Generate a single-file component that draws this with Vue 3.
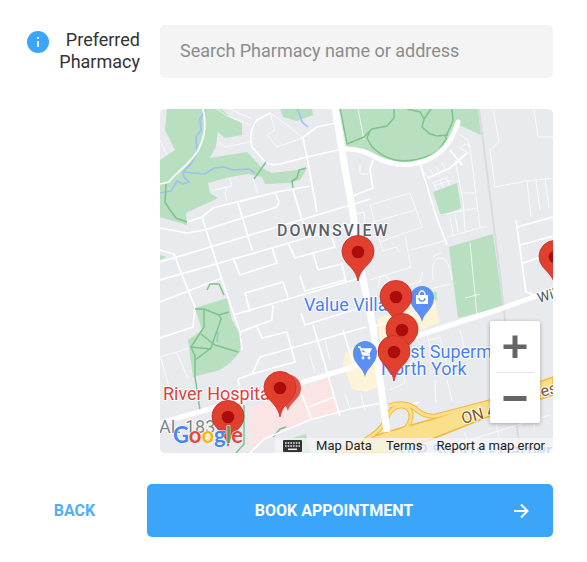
<template>
  <form class="pharmacy-form" @submit.prevent>
    <div class="form-row">
      <div class="label-cell">
        <svg class="info-icon" viewBox="0 0 22 22" aria-hidden="true">
          <circle cx="11" cy="11" r="11" fill="#3aa5f9" />
          <path d="M10 6h2v2h-2zM10 10h2v6h-2z" fill="#e4f3ff" />
        </svg>
        <label for="pharmacy-search">Preferred Pharmacy</label>
      </div>
      <input
        id="pharmacy-search"
        v-model="search"
        class="search-input"
        type="text"
        placeholder="Search Pharmacy name or address"
      />
    </div>

    <div class="form-row">
      <div class="map">
        <svg class="map-canvas" viewBox="160 109 393 344">
          <rect x="160" y="109" width="393" height="344" fill="#e8eaed" />

          <!-- parks -->
          <path v-for="d in parks" :key="d" :d="d" fill="#b8dfc0" />

          <!-- hospital and shopping areas -->
          <path d="M250 408L300 388L329 378L338 411L300 424L263 440L250 447Z" fill="#fae5e4" />
          <path d="M377 319L412 304L435 299L439 323L400 337L380 342Z" fill="#fdf3d6" />
          <path d="M345 353L362 340L374 352L379 386L366 392L352 389L343 365Z" fill="#fdf3d6" />

          <!-- rail line -->
          <path d="M479 109L500 275L520 453" class="rail" />

          <!-- creeks -->
          <path v-for="d in creeks" :key="d" :d="d" class="creek" />

          <!-- streets -->
          <path v-for="d in lanes" :key="d" :d="d" class="road lane" />
          <path v-for="d in streets" :key="d" :d="d" class="road street" />
          <path v-for="d in trails" :key="d" :d="d" class="trail" />
          <path d="M160 423L213 408L297 384L353 367L420 335L500 309L553 290" class="road avenue" />
          <path d="M250 453L264 439L310 420L350 409L382 403" class="road street" />
          <path d="M347 149C360 149 368 153 377 158C400 169 424 166 441 151Q452 141 458 122" class="road crescent" />

          <!-- highway -->
          <path d="M365 440Q381 431 386 420C391 401 413 403 411 417S400 430 392 434" class="ramp-edge" />
          <path d="M389 406Q407 400 418 411Q426 417 436 416L490 402" class="ramp-edge" />
          <path d="M330 453L383 433L433 419L490 400L553 377V395L490 416L432 439L392 453Z" class="highway" />
          <path d="M365 440Q381 431 386 420C391 401 413 403 411 417S400 430 392 434" class="ramp" />
          <path d="M389 406Q407 400 418 411Q426 417 436 416L490 402" class="ramp" />
          <path d="M335 108L345 169L352 207L361 270L373 327L387 432" class="road arterial" />

          <!-- labels -->
          <g class="labels">
            <text x="277" y="236" class="district">DOWNSVIEW</text>
            <text x="304" y="311" class="poi">Value Villa</text>
            <text x="492" y="358" text-anchor="end" class="poi">Trust Superm</text>
            <text x="381" y="375" class="poi">North York</text>
            <text x="394" y="457" class="poi">SVP Sports - Cartwri</text>
            <text x="163" y="400" class="poi hospital">River Hospita</text>
            <text x="159" y="433" class="area">AL 183</text>
            <text x="463" y="424" transform="rotate(-15 463 424)" class="highway-name">ON 4</text>
            <text x="542" y="397" transform="rotate(-15 542 397)" class="highway-name">es</text>
            <text x="539" y="303" transform="rotate(-17 539 303)" class="road-name">Wil</text>
          </g>

          <!-- shop markers -->
          <g transform="translate(422 298)">
            <path d="M0 24C-2 14-12 11-12 0A12 12 0 0 1 12 0C12 11 2 14 0 24Z" fill="#5b8ff5" />
            <path d="M-6-3H6V6H-6Z" fill="#fff" />
            <path d="M-3-3A3 4 0 0 1 3-3" fill="none" stroke="#fff" stroke-width="1.5" />
            <path d="M-3 0A3 3 0 0 0 3 0" fill="none" stroke="#5b8ff5" stroke-width="1.3" />
          </g>
          <g transform="translate(365 353)">
            <path d="M0 24C-2 14-12 11-12 0A12 12 0 0 1 12 0C12 11 2 14 0 24Z" fill="#5b8ff5" />
            <path d="M-7-6H-5L-2 2H5M-4-4H6L4 0H-3Z" fill="#fff" stroke="#fff" stroke-width="1.4" />
            <circle cx="-2" cy="5" r="1.4" fill="#fff" />
            <circle cx="4" cy="5" r="1.4" fill="#fff" />
          </g>

          <!-- hospital marker, mostly behind a pharmacy pin -->
          <path d="M288 411C286 402 274 399 274 388A13 13 0 0 1 301 388C301 399 290 402 288 411Z" fill="#e0524a" />

          <!-- pharmacy pins -->
          <g v-for="pin in pins" :key="pin.x" :transform="`translate(${pin.x} ${pin.y})`">
            <path
              d="M0 29C-2 19-7 16-12 10A16 16 0 1 1 12 10C7 16 2 19 0 29Z"
              fill="#e1402f"
              stroke="#c5302a"
              stroke-width="0.8"
            />
            <circle r="6.3" fill="#ab0e0a" />
          </g>

          <text x="173" y="443" class="logo">
            <tspan fill="#4a86ee">G</tspan><tspan fill="#e2483b">o</tspan><tspan fill="#f2b90d">o</tspan><tspan fill="#4a86ee">g</tspan><tspan fill="#4ca65c">l</tspan><tspan fill="#e2483b">e</tspan>
          </text>
        </svg>

        <div class="zoom-controls">
          <button type="button" aria-label="Zoom in">
            <svg viewBox="0 0 24 24"><path d="M0.5 9.5H9.5V0.5H14.5V9.5H23.5V14H14.5V23H9.5V14H0.5Z" /></svg>
          </button>
          <button type="button" aria-label="Zoom out">
            <svg viewBox="0 0 24 24"><path d="M0.5 10H23.5V15H0.5Z" /></svg>
          </button>
        </div>

        <div class="attribution">
          <button type="button" aria-label="Keyboard shortcuts">
            <svg class="keyboard" viewBox="0 0 19 12">
              <rect width="19" height="12" rx="1" fill="#333" />
              <path d="M2 3H17M2 6H17" stroke="#eee" stroke-width="1.6" stroke-dasharray="1.6 1.1" />
              <path d="M5 9.3H14" stroke="#eee" stroke-width="1.5" />
            </svg>
          </button>
          <button type="button">Map Data</button>
          <a href="#terms">Terms</a>
          <a href="#report">Report a map error</a>
        </div>
      </div>
    </div>

    <div class="actions">
      <button type="button" class="back-btn">BACK</button>
      <button type="submit" class="book-btn">
        <span>BOOK APPOINTMENT</span>
        <svg class="arrow" viewBox="0 0 16 16" aria-hidden="true">
          <path d="M1 8H14M8 1.5L14.5 8L8 14.5" fill="none" stroke="#fff" stroke-width="2" />
        </svg>
      </button>
    </div>
  </form>
</template>

<script setup>
import { ref } from 'vue'

const search = ref('')

// Later pins are drawn over earlier ones
const pins = [
  { x: 358, y: 252 },
  { x: 555, y: 257 },
  { x: 396, y: 297 },
  { x: 402, y: 330 },
  { x: 394, y: 352 },
  { x: 280, y: 388 },
  { x: 228, y: 417 }
]

const parks = [
  'M167 108H220L230 117L242 123V135L225 138L218 132L216 146L210 158L247 152L262 168L272 173L297 170L307 168L300 180L290 183L265 184L262 177L248 174L230 177L208 183L210 193L218 198L186 213L187 225L160 217V160L175 150L165 130Z',
  'M280 108H312L313 115L297 121L283 117Z',
  'M340 108H478L481 135L459 125L447 145Q435 162 405 163Q385 161 367 150L347 147Z',
  'M433 192L457 183L461 208L441 216Z',
  'M449 247L493 234L503 307L458 318Z',
  'M195 308L227 298L232 320L242 337L240 352L230 363L220 370L193 377L188 340L202 330Z',
  'M160 255L166 257L160 260Z',
  'M425 292H437V300L425 304Z',
  'M286 440L306 434L310 453H286Z'
]

const creeks = [
  'M206 109L200 119L201 130L196 137L197 152L191 164L183 172L184 177L189 182L183 184L177 181L171 191L160 193',
  'M183 172L205 174L214 168L224 167L233 170L249 169L255 173',
  'M297 109L301 118L302 122L308 127',
  'M218 332L217 342'
]

const trails = [
  'M166 184L165 202L170 210L176 218L187 222',
  'M266 162L254 179',
  'M306 168L299 170L297 178L292 181L293 188',
  'M340 108L347 144L364 137L372 129L387 126L394 118V108',
  'M370 131L367 138L372 147Q387 161 404 161Q425 160 439 150L447 138',
  'M407 109L420 112L424 119L422 127L430 134L437 136L448 135',
  'M424 119L431 109M452 109L453 121L445 138',
  'M195 309L204 309V327L191 347L195 356V377L200 410',
  'M204 309L219 315L229 312',
  'M219 315L221 319L211 348L195 360M201 334L215 345L238 352M191 347L211 349',
  'M207 290L210 284L219 284L224 295',
  'M244 405V444L236 453',
  'M273 437L280 429L286 427'
]

const streets = [
  'M203 108C207 128 204 140 197 152C188 166 173 175 169 182L160 184',
  'M302 138L317 127L335 123',
  'M303 138L307 157L317 212',
  'M270 113L257 120Q248 132 252 147L265 162Q271 166 280 164L307 157L338 150',
  'M187 222L202 217L213 208L277 192L310 186',
  'M202 217L222 280L240 332L242 350',
  'M160 262L354 204L370 199',
  'M205 230L277 207L279 202L275 192',
  'M160 280L272 248L352 224',
  'M238 203L252 250M293 190L303 223',
  'M233 258L240 275L277 263L272 248',
  'M288 243L295 258L335 247L332 237',
  'M160 228L187 233L205 230M313 253L318 270',
  'M300 276L305 291L345 280M318 270L342 264L346 282',
  'M250 312L245 293L283 282L288 297M233 315L357 279',
  'M240 332L272 320L273 305M257 327L262 338L287 332L295 362L252 374',
  'M301 313L305 325L363 307M313 325L340 416',
  'M252 374L260 357L366 327M238 379L252 374M238 379L241 398',
  'M343 330L354 366M298 385L312 420M309 407L334 397',
  'M160 302L222 278M160 250L174 254L184 280L195 307L193 327L160 338',
  'M373 160L370 170L373 188L350 197',
  'M420 163L435 213L447 245',
  'M428 178L450 168L467 153M450 150L462 165',
  'M516 220L526 292L535 295M517 227L553 217M520 245L553 236M523 263L553 253',
  'M373 327L430 308M391 410L420 402'
]

const lanes = [
  'M217 109L227 116L250 125M230 109L252 119',
  'M270 113L275 130L267 135L277 147L302 138L290 127Z',
  'M250 142L225 147L217 141M160 140L167 155',
  'M215 190L232 186L230 178M215 190L227 187L225 194M253 179L258 194M225 194L227 201',
  'M370 205L410 193L422 227L380 242ZM373 222L415 210M358 109L364 140',
  'M380 242L383 251L396 247L400 253M405 235L411 267L380 277L378 288M411 250L447 240',
  'M360 165V174H368M352 215L364 212L366 228',
  'M425 172L429 180M430 169L434 177M436 167L440 175M442 163L446 171M432 183L448 177M434 186L452 180M433 182L437 190M440 180L444 188M446 178L450 186',
  'M459 134L468 140L471 155L480 227M455 160L463 200L465 231M461 193H475M440 215L477 208M447 237L487 226M450 217L453 235M455 214L458 232',
  'M460 148A8 8 0 0 1 471 146M460 148L470 154',
  'M493 109L499 142L490 150L495 187L527 181L553 178M527 181L531 217M536 181L540 210M545 179L549 208',
  'M534 109L538 137H553M470 243L477 315M433 257L442 252M433 280Q430 257 442 258Q449 260 452 280',
  'M160 357L190 348M177 353L188 379M161 358L169 387',
  'M425 327L437 374M430 340L440 337L448 370M435 380L436 403M460 330L466 355M447 380L452 401M390 390L405 383L402 370',
  'M345 394L350 409M361 395L365 410M310 355L315 373M325 340L330 360',
  'M440 441L444 449M465 433L470 450M453 445L550 415M495 418L499 438M530 408L535 430',
  'M403 286L420 282L423 272M430 289L450 284M370 280L385 275L395 285M465 298L480 294'
]
</script>

<style>
body {
  margin: 0;
  background: #fff;
}
</style>

<style scoped>
.pharmacy-form {
  display: flex;
  flex-direction: column;
  gap: 31px;
  padding: 25px 34px 25px 27px;
  font-family: Roboto, "Liberation Sans", sans-serif;
}

.form-row {
  display: grid;
  grid-template-columns: 113px minmax(0, 1fr);
  column-gap: 20px;
}

.label-cell {
  display: flex;
  justify-content: space-between;
  align-items: flex-start;
  padding-top: 4px;
  color: #333;
  font-size: 18px;
  line-height: 22px;
  text-align: right;
}

.label-cell label {
  width: 84px;
}

.info-icon {
  flex: none;
  width: 22px;
  height: 22px;
  margin-top: 2px;
}

.search-input {
  box-sizing: border-box;
  width: 100%;
  height: 53px;
  padding: 0 20px 2px;
  border: none;
  border-radius: 5px;
  background: #f4f4f4;
  color: #444;
  font-family: inherit;
  font-size: 18px;
}

.search-input::placeholder {
  color: #8c8c8c;
  opacity: 1;
}

.map {
  position: relative;
  grid-column: 2;
  overflow: hidden;
  border-radius: 5px;
}

.map-canvas {
  display: block;
  width: 100%;
}

.road {
  fill: none;
  stroke: #fff;
  stroke-linejoin: round;
}

.lane {
  stroke-width: 1;
  opacity: 0.75;
}

.street {
  stroke-width: 1.7;
}

.avenue {
  stroke-width: 5;
}

.crescent {
  stroke-width: 5;
  stroke-linecap: round;
}

.arterial {
  stroke-width: 7;
}

.rail {
  fill: none;
  stroke: #d9dbe0;
  stroke-width: 2;
}

.creek {
  fill: none;
  stroke: #9cc0f5;
  stroke-width: 1.6;
}

.trail {
  fill: none;
  stroke: #7cc48a;
  stroke-width: 1.5;
}

.highway {
  fill: #fbe08c;
  stroke: #f2ba3a;
  stroke-width: 1.5;
}

.ramp-edge {
  fill: none;
  stroke: #f2ba3a;
  stroke-width: 5;
}

.ramp {
  fill: none;
  stroke: #fbe08c;
  stroke-width: 3;
}

.labels text {
  paint-order: stroke;
  stroke: #fff;
  stroke-width: 2;
  stroke-linejoin: round;
}

.district {
  fill: #5c6167;
  font-size: 16px;
  font-weight: 500;
  letter-spacing: 2px;
}

.poi {
  fill: #4a80ec;
  font-size: 18px;
}

.labels .hospital {
  fill: #d9423a;
}

.area {
  fill: #78878f;
  font-size: 18px;
}

.highway-name {
  fill: #7d5a2c;
  font-size: 16px;
}

.road-name {
  fill: #55595e;
  font-size: 14px;
}

.logo {
  font-family: Lato, sans-serif;
  font-size: 22px;
  font-weight: 700;
  paint-order: stroke;
  stroke: #fff;
  stroke-width: 1;
}

.zoom-controls {
  position: absolute;
  right: 13px;
  bottom: 30px;
  display: flex;
  flex-direction: column;
  width: 50px;
  border-radius: 2px;
  background: #fff;
  box-shadow: 0 1px 4px rgba(0, 0, 0, 0.3);
}

.zoom-controls button {
  display: flex;
  justify-content: center;
  align-items: center;
  height: 51px;
  padding: 0;
  border: none;
  background: none;
  cursor: pointer;
}

.zoom-controls button + button::before {
  content: "";
  position: absolute;
  top: 51px;
  left: 6px;
  right: 6px;
  height: 1px;
  background: #e6e6e6;
}

.zoom-controls svg {
  width: 24px;
  height: 24px;
  fill: #666;
}

.attribution {
  position: absolute;
  right: 0;
  bottom: 0;
  display: flex;
  align-items: center;
  gap: 14px;
  height: 15px;
  padding: 0 8px;
  background: rgba(245, 245, 245, 0.75);
  font-size: 13px;
}

.attribution button,
.attribution a {
  padding: 0;
  border: none;
  background: none;
  color: #222;
  font: inherit;
  line-height: 15px;
  text-decoration: none;
  white-space: nowrap;
}

.keyboard {
  display: block;
  width: 19px;
  height: 12px;
}

.actions {
  display: grid;
  grid-template-columns: 95px minmax(0, 1fr);
  column-gap: 25px;
}

.actions button {
  height: 53px;
  border: none;
  font-family: inherit;
  font-size: 16px;
  font-weight: 700;
  cursor: pointer;
}

.back-btn {
  background: none;
  color: #54aef5;
}

.book-btn {
  display: grid;
  grid-template-columns: 1fr 16px;
  align-items: center;
  padding: 0 24px 0 8px;
  border-radius: 5px;
  background: #3aa5f9;
  color: #fff;
}

.arrow {
  width: 16px;
  height: 16px;
}
</style>
